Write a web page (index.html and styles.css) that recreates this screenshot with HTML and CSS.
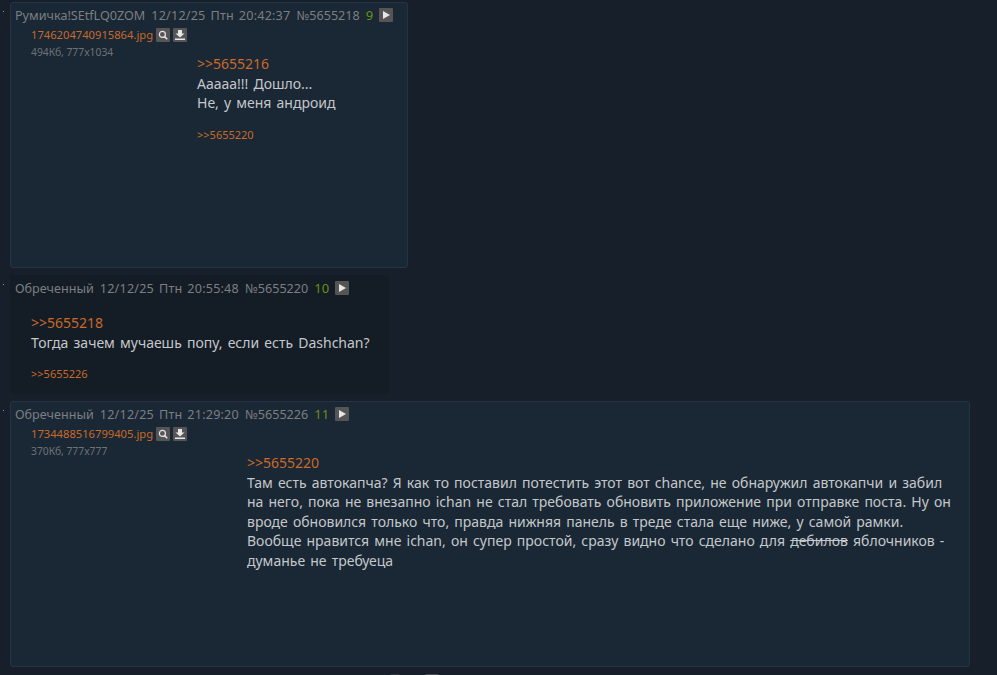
FILE: index.html
```html
<!DOCTYPE html>
<html lang="en">
<head>
    <meta charset="UTF-8">
    <title>Тред</title>
    <link rel="stylesheet" href="styles.css">
</head>
<body>
    <div class="thread">
        <div class="row">
            <span class="dot"></span>
            <div class="post post-reply post-1">
                <div class="head">
                    <span class="name">Румичка!SEtfLQ0ZOM</span>
                    <span class="date">12/12/25 Птн 20:42:37</span>
                    <span>№5655218</span>
                    <span class="count">9</span>
                    <span class="btn"><svg width="12" height="12" viewBox="0 0 12 12"><path d="M3 2l7 4-7 4z" fill="#e6e6e6"/></svg></span>
                </div>
                <div class="body">
                    <div class="file file-1">
                        <div class="file-line">
                            <a class="file-name">1746204740915864.jpg</a>
                            <span class="btn"><svg width="12" height="12" viewBox="0 0 12 12"><circle cx="5.4" cy="5.4" r="3" fill="none" stroke="#e6e6e6" stroke-width="1.2"/><path d="M7.6 7.6l2.6 2.6" stroke="#e6e6e6" stroke-width="1.5"/></svg></span>
                            <span class="btn"><svg width="12" height="12" viewBox="0 0 12 12"><path d="M4 1h4v3.5h2.5L6 8.5 1.5 4.5H4zM1 9.5h10V11H1z" fill="#e6e6e6"/></svg></span>
                        </div>
                        <div class="file-meta">494Кб, 777x1034</div>
                    </div>
                    <div class="message">
                        <a class="quote">&gt;&gt;5655216</a><br>
                        Ааааа!!! Дошло...<br>
                        Не, у меня андроид
                        <div class="refs"><a>&gt;&gt;5655220</a></div>
                    </div>
                </div>
            </div>
        </div>

        <div class="row">
            <span class="dot"></span>
            <div class="post post-2">
                <div class="head">
                    <span class="name">Обреченный</span>
                    <span class="date">12/12/25 Птн 20:55:48</span>
                    <span>№5655220</span>
                    <span class="count">10</span>
                    <span class="btn"><svg width="12" height="12" viewBox="0 0 12 12"><path d="M3 2l7 4-7 4z" fill="#e6e6e6"/></svg></span>
                </div>
                <div class="message message-plain">
                    <a class="quote">&gt;&gt;5655218</a><br>
                    Тогда зачем мучаешь попу, если есть Dashchan?
                    <div class="refs"><a>&gt;&gt;5655226</a></div>
                </div>
            </div>
        </div>

        <div class="row">
            <span class="dot"></span>
            <div class="post post-reply post-3">
                <div class="head">
                    <span class="name">Обреченный</span>
                    <span class="date">12/12/25 Птн 21:29:20</span>
                    <span>№5655226</span>
                    <span class="count">11</span>
                    <span class="btn"><svg width="12" height="12" viewBox="0 0 12 12"><path d="M3 2l7 4-7 4z" fill="#e6e6e6"/></svg></span>
                </div>
                <div class="body">
                    <div class="file file-3">
                        <div class="file-line">
                            <a class="file-name">1734488516799405.jpg</a>
                            <span class="btn"><svg width="12" height="12" viewBox="0 0 12 12"><circle cx="5.4" cy="5.4" r="3" fill="none" stroke="#e6e6e6" stroke-width="1.2"/><path d="M7.6 7.6l2.6 2.6" stroke="#e6e6e6" stroke-width="1.5"/></svg></span>
                            <span class="btn"><svg width="12" height="12" viewBox="0 0 12 12"><path d="M4 1h4v3.5h2.5L6 8.5 1.5 4.5H4zM1 9.5h10V11H1z" fill="#e6e6e6"/></svg></span>
                        </div>
                        <div class="file-meta">370Кб, 777x777</div>
                    </div>
                    <div class="message">
                        <a class="quote">&gt;&gt;5655220</a><br>
                        Там есть автокапча? Я как то поставил потестить этот вот chance, не обнаружил автокапчи и забил на него, пока не внезапно ichan не стал требовать обновить приложение при отправке поста. Ну он вроде обновился только что, правда нижняя панель в треде стала еще ниже, у самой рамки. Вообще нравится мне ichan, он супер простой, сразу видно что сделано для <s>дебилов</s> яблочников - думанье не требуеца
                    </div>
                </div>
            </div>
        </div>

        <div class="pager">
            <span class="pager-btn"></span>
            <span class="pager-btn pager-btn-wide"></span>
        </div>
    </div>
</body>
</html>
```

FILE: styles.css
```css
html, body {
    height: 100%;
    overflow: hidden;
}
body {
    margin: 0;
    background: #17202a;
    color: #c5c8ca;
    font-family: "Noto Sans", sans-serif;
    font-size: 14px;
}
a { color: #c96a26; }
.thread {
    padding: 2px 27px 0 0;
    display: flex;
    flex-direction: column;
    gap: 7px;
}
.row {
    display: flex;
    align-items: flex-start;
}
.dot {
    width: 1px;
    height: 1px;
    background: #8a8f94;
    margin: 9px 6px 0 3px;
    flex: none;
}
.post {
    box-sizing: border-box;
    border-radius: 3px;
    border: 1px solid transparent;
}
.post-reply {
    background: #1a2735;
    border-color: #243444;
}
.post-1 { width: 398px; height: 266px; }
.post-2 { width: 379px; height: 119px; background: #141c26; }
.post-3 { width: 960px; height: 266px; }
.head {
    display: flex;
    align-items: center;
    gap: 6px;
    height: 20px;
    margin: 2px 0 0 4px;
    color: #7c7f82;
    font-size: 12.6px;
    white-space: nowrap;
}
.date {
    letter-spacing: 0.2px;
    word-spacing: 1.5px;
}
.count { color: #6a8f14; font-size: 13px; }
.btn {
    display: flex;
    align-items: center;
    justify-content: center;
    width: 14px;
    height: 14px;
    background: #555;
    border-radius: 1px;
}
.body { display: flex; }
.file {
    box-sizing: border-box;
    padding: 2px 0 0 20px;
    flex: none;
}
.file-1 { width: 186px; }
.file-3 { width: 236px; }
.file-line {
    display: flex;
    align-items: center;
    gap: 3px;
    white-space: nowrap;
}
.file-name { font-size: 11.2px; }
.file-meta {
    margin-top: 3px;
    font-size: 10.3px;
    color: #6f7377;
}
.message {
    margin-top: 29px;
    padding-right: 12px;
    font-size: 14px;
    line-height: 19.6px;
    word-spacing: 1.5px;
}
.message-plain {
    margin: 15px 0 0 20px;
    padding-right: 8px;
}
.quote { font-size: 14px; }
.refs {
    margin-top: 12px;
    font-size: 11px;
}
.pager {
    display: flex;
    gap: 25px;
    padding-left: 390px;
}
.pager-btn {
    width: 10px;
    height: 14px;
    background: #33393f;
    border-radius: 2px;
}
.pager-btn-wide { width: 14px; background: #4a4f54; }
```
